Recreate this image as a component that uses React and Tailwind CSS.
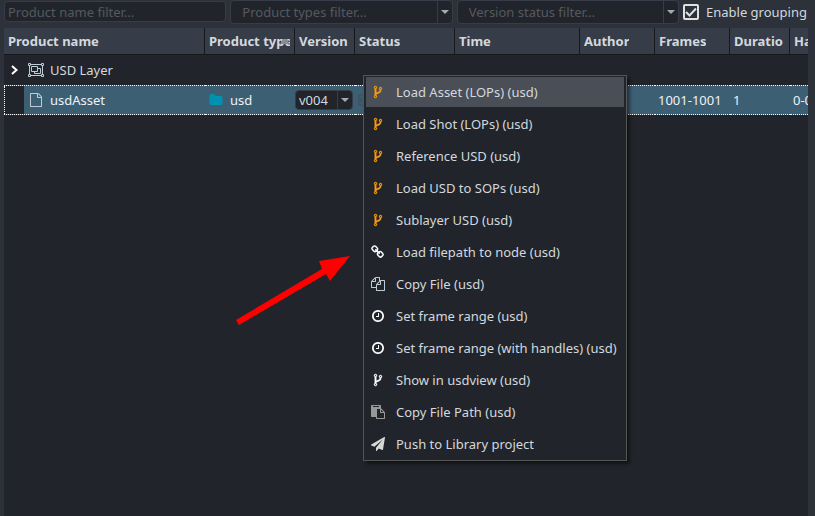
import React, { useState } from 'react';

// Glyphs drawn on a 1792 grid
const GLYPHS = {
  fork: 'M672 1472q0-40-28-68t-68-28-68 28-28 68 28 68 68 28 68-28 28-68zm0-1152q0-40-28-68t-68-28-68 28-28 68 28 68 68 28 68-28 28-68zm640 128q0-40-28-68t-68-28-68 28-28 68 28 68 68 28 68-28 28-68zm96 0q0 52-26 96.5t-70 69.5q-2 287-226 414-67 38-203 81-128 40-169.5 71t-41.5 100v26q44 25 70 69.5t26 96.5q0 80-56 136t-136 56-136-56-56-136q0-52 26-96.5t70-69.5v-820q-44-25-70-69.5t-26-96.5q0-80 56-136t136-56 136 56 56 136q0 52-26 96.5t-70 69.5v497q54-26 154-57 55-17 87.5-29.5t70.5-31 59-39.5 40.5-51 28-69.5 8.5-91.5q-44-25-70-69.5t-26-96.5q0-80 56-136t136-56 136 56 56 136z',
  chain: 'M1456 1216q0-40-28-68l-208-208q-28-28-68-28-42 0-72 32 3 3 19 18.5t21.5 21.5 15 19 13 25.5 3.5 27.5q0 40-28 68t-68 28q-15 0-27.5-3.5t-25.5-13-19-15-21.5-21.5-18.5-19q-33 31-33 73 0 40 28 68l206 207q27 27 68 27 40 0 68-26l147-146q28-28 28-67zm-703-705q0-40-28-68l-206-207q-28-28-68-28-39 0-68 27l-147 146q-28 28-28 67 0 40 28 68l208 208q27 27 68 27 42 0 72-31-3-3-19-18.5t-21.5-21.5-15-19-13-25.5-3.5-27.5q0-40 28-68t68-28q15 0 27.5 3.5t25.5 13 19 15 21.5 21.5 18.5 19q33-31 33-73zm895 705q0 120-85 203l-147 146q-83 83-203 83-121 0-204-85l-206-207q-83-83-83-203 0-123 88-209l-88-88q-86 88-208 88-120 0-204-84l-208-208q-84-84-84-204t85-203l147-146q83-83 203-83 121 0 204 85l206 207q83 83 83 203 0 123-88 209l88 88q86-88 208-88 120 0 204 84l208 208q84 84 84 204z',
  files: 'M1696 384q40 0 68 28t28 68v1216q0 40-28 68t-68 28h-960q-40 0-68-28t-28-68v-288h-544q-40 0-68-28t-28-68v-672q0-40 20-88t48-76l408-408q28-28 76-48t88-20h416q40 0 68 28t28 68v328q68-40 128-40h416zm-544 213l-299 299h299v-299zm-640-384l-299 299h299v-299zm196 647l316-316v-416h-384v416q0 40-28 68t-68 28h-416v640h512v-256q0-40 20-88t48-76zm956 804v-1152h-384v416q0 40-28 68t-68 28h-416v640h896z',
  clock: 'M1024 544v448q0 14-9 23t-23 9h-320q-14 0-23-9t-9-23v-64q0-14 9-23t23-9h224v-352q0-14 9-23t23-9h64q14 0 23 9t9 23zm416 352q0-148-73-273t-198-198-273-73-273 73-198 198-73 273 73 273 198 198 273 73 273-73 198-198 73-273zm224 0q0 209-103 385.5t-279.5 279.5-385.5 103-385.5-103-279.5-279.5-103-385.5 103-385.5 279.5-279.5 385.5-103 385.5 103 279.5 279.5 103 385.5z',
  paste: 'M768 1664h896v-640h-416q-40 0-68-28t-28-68v-416h-384v1152zm256-1440v-64q0-13-9.5-22.5t-22.5-9.5h-704q-13 0-22.5 9.5t-9.5 22.5v64q0 13 9.5 22.5t22.5 9.5h704q13 0 22.5-9.5t9.5-22.5zm256 672h299l-299-299v299zm512 128v672q0 40-28 68t-68 28h-960q-40 0-68-28t-28-68v-160h-544q-40 0-68-28t-28-68v-1344q0-40 28-68t68-28h1088q40 0 68 28t28 68v328q21 13 36 28l408 408q28 28 48 76t20 88z',
  plane: 'M1764 11q33 24 27 64l-256 1536q-5 29-32 45-14 8-31 8-11 0-24-5l-453-185-242 295q-18 23-49 23-13 0-22-4-19-7-30.5-23.5t-11.5-36.5v-349l864-1059-1069 925-395-162q-37-14-40-55-2-40 32-59l1664-960q15-9 32-9 20 0 36 11z',
  file: 'M1596 380q28 28 48 76t20 88v1152q0 40-28 68t-68 28h-1344q-40 0-68-28t-28-68v-1600q0-40 28-68t68-28h896q40 0 88 20t76 48zm-444-244v376h376q-10-29-22-41l-313-313q-12-12-41-22zm384 1528v-1024h-416q-40 0-68-28t-28-68v-416h-768v1536h1280z',
  folder: 'M1728 608v704q0 92-66 158t-158 66h-1216q-92 0-158-66t-66-158v-960q0-92 66-158t158-66h320q92 0 158 66t66 158v32h672q92 0 158 66t66 158z',
};

const menuItems = [
  { icon: 'fork', color: 'text-[#ff9c0a]', label: 'Load Asset (LOPs) (usd)' },
  { icon: 'fork', color: 'text-[#ff9c0a]', label: 'Load Shot (LOPs) (usd)' },
  { icon: 'fork', color: 'text-[#ff9c0a]', label: 'Reference USD (usd)' },
  { icon: 'fork', color: 'text-[#ff9c0a]', label: 'Load USD to SOPs (usd)' },
  { icon: 'fork', color: 'text-[#ff9c0a]', label: 'Sublayer USD (usd)' },
  { icon: 'chain', color: 'text-white', label: 'Load filepath to node (usd)' },
  { icon: 'files', color: 'text-[#bfccd6]', label: 'Copy File (usd)' },
  { icon: 'clock', color: 'text-white', label: 'Set frame range (usd)' },
  { icon: 'clock', color: 'text-white', label: 'Set frame range (with handles) (usd)' },
  { icon: 'fork', color: 'text-white', label: 'Show in usdview (usd)' },
  { icon: 'paste', color: 'text-[#999999]', label: 'Copy File Path (usd)' },
  { icon: 'plane', color: 'text-[#d8d8d8]', label: 'Push to Library project' },
];

const columns = [
  { label: 'Product name', width: 'w-[201px]' },
  { label: 'Product type', width: 'w-[90px]', sorted: true },
  { label: 'Version', width: 'w-[60px]' },
  { label: 'Status', width: 'w-[100px]' },
  { label: 'Time', width: 'w-[125px]' },
  { label: 'Author', width: 'w-[75px]' },
  { label: 'Frames', width: 'w-[75px]' },
  { label: 'Duratio', width: 'w-[60px]' },
  { label: 'Handles', width: 'w-[74px]' },
];

function Glyph({ name, className }) {
  return (
    <svg viewBox="0 0 1792 1792" fill="currentColor" className={className} aria-hidden="true">
      <path d={GLYPHS[name]} stroke={name === 'fork' ? 'currentColor' : 'none'} strokeWidth="50" />
    </svg>
  );
}

function GroupIcon() {
  return (
    <svg viewBox="0 0 16 14" fill="none" stroke="currentColor" className="h-[14px] w-4 shrink-0 text-[#bfccd6]" aria-hidden="true">
      <path d="M2.500 1.500h11M2.500 12.500h11M1.500 2.500v9M14.500 2.500v9" />
      <path d="M.5.5h2v2h-2zM13.500.5h2v2h-2zM.5 11.500h2v2h-2zM13.500 11.500h2v2h-2z" />
      <path d="M3.500 3.500h6v5h-6zM9.500 5.500h3v5h-6v-2" />
    </svg>
  );
}

function DownArrow() {
  return (
    <svg viewBox="0 0 8 4" className="h-1 w-2" fill="#a6a9ad" aria-hidden="true">
      <path d="M0 0h8L4 4z" />
    </svg>
  );
}

function FilterSelect({ label }) {
  return (
    <div className="relative h-6 min-w-0">
      <select
        aria-label={label}
        className="h-full w-full appearance-none rounded border border-[#373d48] bg-[#21252b] pl-[11px] pr-5 text-[#545960] outline-none"
      >
        <option>{label}</option>
      </select>
      <span className="pointer-events-none absolute inset-y-px right-px flex w-[15px] items-center justify-center border-l border-[#373d48]">
        <DownArrow />
      </span>
    </div>
  );
}

function Toolbar() {
  const [grouping, setGrouping] = useState(true);

  return (
    <div className="grid h-7 grid-cols-[1fr_1fr_1fr_auto] gap-1 pr-2 pl-1">
      <input
        type="text"
        aria-label="Product name filter"
        placeholder="Product name filter..."
        className="mt-px h-[21px] w-full min-w-0 rounded border border-[#373d48] bg-[#21252b] px-[3px] text-[#d3d8de] outline-none placeholder:text-[#545960]"
      />
      <FilterSelect label="Product types filter..." />
      <FilterSelect label="Version status filter..." />
      <label className="flex h-6 items-center gap-[7px]">
        <span className="grid size-4 place-items-center">
          <input
            type="checkbox"
            checked={grouping}
            onChange={(e) => setGrouping(e.target.checked)}
            className="col-start-1 row-start-1 size-4 appearance-none rounded-xs border-2 border-[#e0e0dc]"
          />
          {grouping && (
            <svg viewBox="0 0 16 16" className="pointer-events-none col-start-1 row-start-1 size-4" fill="none" stroke="#e0e0dc" strokeWidth="2" aria-hidden="true">
              <path d="M3 8l3.500 3.500L13 4.500" />
            </svg>
          )}
        </span>
        Enable grouping
      </label>
    </div>
  );
}

function ProductTable() {
  const cell = 'h-[30px] border-y border-dotted border-white bg-[#3d5f74] p-0 text-[#eef2f5]';

  return (
    <div className="mr-[7px] ml-1 flex-1 overflow-hidden bg-[#21252b]">
      <table className="w-[860px] table-fixed border-separate border-spacing-0 whitespace-nowrap">
        <thead>
          <tr>
            {columns.map((col) => (
              <th
                key={col.label}
                className={`${col.width} h-[27px] border-r border-b border-[#16181b] bg-[#373d48] p-0 text-left font-bold`}
              >
                <div className="flex items-center overflow-hidden pr-1 pl-1">
                  <span className="overflow-hidden">{col.label}</span>
                  {col.sorted && (
                    <svg viewBox="0 0 10 5" className="-ml-[10px] h-[5px] w-[10px] shrink-0" fill="#8a8d90" aria-hidden="true">
                      <path d="M0 5L3 0h4l3 5z" />
                    </svg>
                  )}
                </div>
              </th>
            ))}
          </tr>
        </thead>
        <tbody>
          <tr>
            <td colSpan={9} className="h-[30px] p-0">
              <div className="flex items-center">
                <button type="button" aria-label="Expand USD Layer" className="flex w-6 justify-start pl-[7px]">
                  <svg viewBox="0 0 7 10" className="h-[10px] w-[7px]" fill="none" stroke="#fff" strokeWidth="2" aria-hidden="true">
                    <path d="M1 1l4.500 4L1 9" />
                  </svg>
                </button>
                <GroupIcon />
                <span className="ml-[6px]">USD Layer</span>
              </div>
            </td>
          </tr>
          <tr>
            <td className={cell}>
              <div className="flex h-7 items-center">
                <span className="h-7 w-5 border-l border-dotted border-white bg-[#21252b]" />
                <Glyph name="file" className="ml-[5px] size-[14px] text-[#bfccd6]" />
                <span className="ml-[7px]">usdAsset</span>
              </div>
            </td>
            <td className={cell}>
              <div className="flex items-center gap-[7px] pl-1">
                <Glyph name="folder" className="size-[14px] text-[#0091b2]" />
                usd
              </div>
            </td>
            <td className={cell}>
              <div className="relative h-5 w-[58px]">
                <select
                  aria-label="Version"
                  className="h-full w-full appearance-none rounded border border-[#373d48] bg-[#21252b] pl-[3px] text-[#d3d8de] outline-none"
                >
                  <option>v004</option>
                </select>
                <span className="pointer-events-none absolute inset-y-px right-px flex w-[15px] items-center justify-center border-l border-[#373d48]">
                  <DownArrow />
                </span>
              </div>
            </td>
            <td className={cell}>
              <svg viewBox="0 0 12 12" className="ml-[3px] size-3" fill="none" stroke="#434a56" aria-hidden="true">
                <rect x="1" y="1" width="10" height="10" rx="1" />
                <path d="M3 9V4l6 5V3" />
              </svg>
            </td>
            <td className={cell} />
            <td className={cell} />
            <td className={cell}>
              <span className="pl-[3px]">1001-1001</span>
            </td>
            <td className={cell}>
              <span className="pl-[3px]">1</span>
            </td>
            <td className={cell}>
              <span className="pl-[3px]">0-0</span>
            </td>
          </tr>
        </tbody>
      </table>
    </div>
  );
}

function ContextMenu() {
  return (
    <div
      role="menu"
      className="absolute top-[75px] left-[363px] flex flex-col gap-[2px] border border-[#555555] bg-[#21252b] px-[2px] py-px shadow-[3px_3px_3px_rgba(0,0,0,0.45)]"
    >
      {menuItems.map((item, index) => (
        <button
          key={item.label}
          type="button"
          role="menuitem"
          className={`flex h-[30px] items-center gap-[11px] pr-[7px] pl-[5px] text-left whitespace-nowrap ${
            index === 0 ? 'bg-[#4a4e56]' : 'hover:bg-[#4a4e56]'
          }`}
        >
          <Glyph name={item.icon} className={`size-[14px] shrink-0 ${item.color}`} />
          {item.label}
        </button>
      ))}
    </div>
  );
}

function App() {
  return (
    <div className="relative flex min-h-screen flex-col overflow-hidden bg-[#2c313a] font-['Noto_Sans',sans-serif] text-[13px] leading-[18px] text-[#d3d8de]">
      <Toolbar />
      <ProductTable />
      <ContextMenu />
      {/* Annotation arrow pointing at the menu */}
      <svg viewBox="0 0 114 70" className="pointer-events-none absolute top-[255px] left-[236px] h-[70px] w-[114px]" fill="#ff0000" aria-hidden="true">
        <path d="M0 65L86 14L83 6L114 1L94 26L90 19L3 70z" />
      </svg>
    </div>
  );
}

export default App;
